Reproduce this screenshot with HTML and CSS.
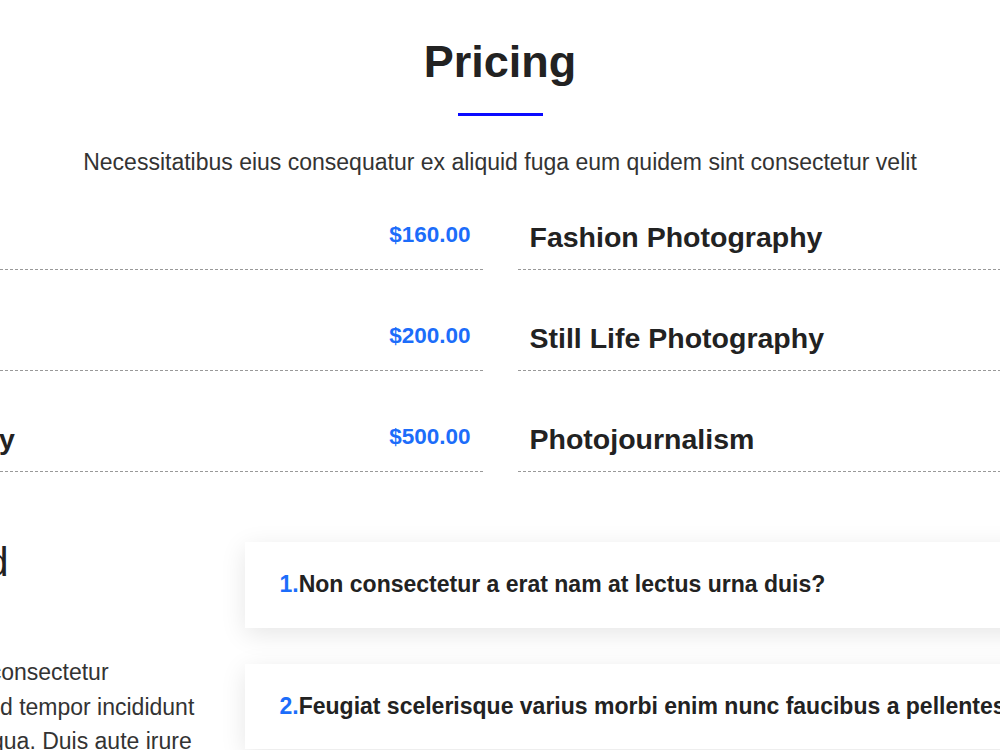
FILE: index.html
```html
<!DOCTYPE html>
<html lang="en">
<head>
    <meta charset="UTF-8">
    <title>Pricing - Photo Studio</title>
    <link rel="stylesheet" href="styles.css">
</head>
<body>
    <section class="pricing">
        <h2>Pricing</h2>
        <div class="line"></div>
        <p class="lead">Necessitatibus eius consequatur ex aliquid fuga eum quidem sint consectetur velit</p>

        <div class="wrap">
            <div class="price-list">
                <div class="price-item">
                    <h3>Portrait Photography</h3>
                    <span class="price">$160.00</span>
                </div>
                <div class="price-item">
                    <h3>Fashion Photography</h3>
                    <span class="price">$300.00</span>
                </div>
                <div class="price-item">
                    <h3>Sports Photography</h3>
                    <span class="price">$200.00</span>
                </div>
                <div class="price-item">
                    <h3>Still Life Photography</h3>
                    <span class="price">$120.00</span>
                </div>
                <div class="price-item">
                    <h3>Wedding Photography</h3>
                    <span class="price">$500.00</span>
                </div>
                <div class="price-item">
                    <h3>Photojournalism</h3>
                    <span class="price">$200.00</span>
                </div>
            </div>
        </div>
    </section>

    <section class="wrap">
        <div class="faq">
            <div class="faq-intro">
                <h2>Frequently Asked <span>Questions</span></h2>
                <p>Lorem ipsum dolor sit amet, consectetur adipiscing elit, sed do eiusmod tempor incididunt ut labore et dolore magna aliqua. Duis aute irure dolor in reprehenderit in voluptate velit esse cillum dolore eu fugiat nulla pariatur.</p>
            </div>

            <div class="faq-list">
                <div class="faq-item"><span class="num">1.</span>Non consectetur a erat nam at lectus urna duis?</div>
                <div class="faq-item"><span class="num">2.</span>Feugiat scelerisque varius morbi enim nunc faucibus a pellentesque?</div>
                <div class="faq-item"><span class="num">3.</span>Dolor sit amet consectetur adipiscing elit pellentesque habitant morbi?</div>
            </div>
        </div>
    </section>
</body>
</html>
```

FILE: styles.css
```css
body {
    margin: 0;
    font-family: "Liberation Sans", Arial, sans-serif;
    font-size: 23px;
    color: #333;
    background-color: #fff;
    overflow: hidden;
}

h2,
h3,
p {
    margin: 0;
}

.pricing {
    text-align: center;
    padding-top: 35px;
}

.pricing h2 {
    font-size: 45px;
    line-height: 1.2;
    color: #222;
}

.line {
    width: 85px;
    height: 3px;
    background-color: #0a0aff;
    margin: 24px auto 0;
}

.lead {
    margin-top: 29px;
    line-height: 1.5;
    color: #333;
}

/* wide rows, kept centred even when they run past the window */
.wrap {
    display: flex;
    justify-content: center;
}

.price-list {
    flex-shrink: 0;
    width: 1601px;
    display: grid;
    grid-template-columns: 1fr 1fr;
    column-gap: 35px;
    row-gap: 51px;
    margin-top: 40px;
    text-align: left;
}

.price-item {
    display: flex;
    justify-content: space-between;
    align-items: center;
    padding: 0 12px 15px;
    border-bottom: 1px dashed #999;
}

.price-item h3 {
    font-size: 28.5px;
    line-height: 1.2;
    color: #222;
}

.price {
    font-size: 22.5px;
    font-weight: bold;
    color: #1c6dfa;
    margin-bottom: 3px;
}

.faq {
    flex-shrink: 0;
    width: 1601px;
    display: grid;
    grid-template-columns: 505px 1fr;
    column-gap: 40px;
    margin-top: 66px;
}

.faq-intro h2 {
    font-size: 40px;
    font-weight: normal;
    line-height: 1.2;
    color: #222;
}

.faq-intro h2 span {
    display: block;
}

.faq-intro p {
    margin-top: 21px;
    line-height: 1.5;
}

.faq-list {
    padding-top: 4px;
}

.faq-item {
    background-color: #fff;
    padding: 29px 35px;
    margin-bottom: 36px;
    font-weight: bold;
    line-height: 1.2;
    color: #222;
    box-shadow: 0 6px 24px rgba(0, 0, 0, 0.1);
}

.num {
    color: #1c6dfa;
}
```
